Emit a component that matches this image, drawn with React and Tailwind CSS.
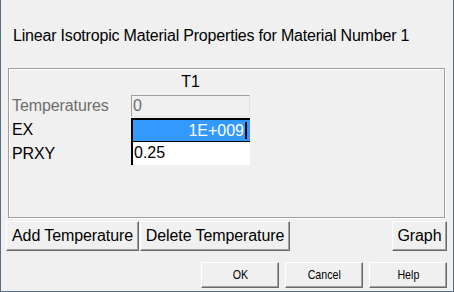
import React from 'react'

const sans = { fontFamily: '"Liberation Sans", Arial, sans-serif' }

function Button({ className = '', children, small }) {
  return (
    <button
      className={`flex items-center justify-center bg-[#f0f0f0] border border-t-white border-l-white border-b-[#696969] border-r-[#696969] shadow-[inset_-1px_-1px_0_#a0a0a0] text-black ${small ? 'text-[13px]' : 'text-[16px] tracking-[-0.1px]'} ${className}`}
      style={sans}
    >
      {small ? <span className="inline-block scale-x-[0.82]">{children}</span> : children}
    </button>
  )
}

export default function App() {
  const rows = [
    { label: 'Temperatures', value: '0', kind: 'disabled' },
    { label: 'EX', value: '1E+009', kind: 'selected' },
    { label: 'PRXY', value: '0.25', kind: 'normal' },
  ]

  return (
    <div
      className="w-[454px] h-[292px] bg-[#f0f0f0] border-l border-r border-b border-[#5b6d85] flex flex-col text-black overflow-hidden"
      style={sans}
    >
      <div className="mt-[27px] ml-[12px] text-[16px] leading-[18px] h-[18px] tracking-[-0.19px] whitespace-nowrap">
        Linear Isotropic Material Properties for Material Number 1
      </div>

      {/* Group box */}
      <div className="mt-[23px] ml-[7px] w-[437px] h-[150px] border border-[#a0a0a0] shadow-[inset_1px_1px_0_#fff,1px_1px_0_#fff] pl-[3px] pt-[4px]">
        <div className="flex">
          <div className="w-[119px]" />
          <div className="w-[119px] text-center text-[16px] leading-[18px]">T1</div>
        </div>
        <div className="mt-[4px] flex flex-col">
          {rows.map((r) => (
            <div
              key={r.label}
              className={`flex items-center ${r.kind === 'selected' ? 'h-[24px] mt-[1px]' : r.kind === 'normal' ? 'h-[23px]' : 'h-[22px]'}`}
            >
              <div className={`w-[119px] text-[16px] leading-[18px] tracking-[-0.1px] ${r.kind === 'disabled' ? 'text-[#6d6d6d]' : 'text-black'}`}>
                {r.label}
              </div>
              {r.kind === 'disabled' && (
                <div className="w-[119px] h-full bg-[#f0f0f0] border-t border-l border-[#a0a0a0] border-b border-r border-b-[#e3e3e3] border-r-[#e3e3e3] text-[#6d6d6d] text-[16px] leading-[20px] pl-[1px]">
                  {r.value}
                </div>
              )}
              {r.kind === 'selected' && (
                <div className="w-[119px] h-full bg-[#3399ff] border-t-2 border-l-2 border-b border-black border-b-black flex items-center justify-end pr-[3px] text-white text-[16px]">
                  <span>{r.value}</span>
                  <span className="ml-[1px] w-[2px] h-[17px] bg-black" />
                </div>
              )}
              {r.kind === 'normal' && (
                <div className="w-[119px] h-full bg-white border-l-2 border-black text-[16px] leading-[22px] pl-[1px]">
                  {r.value}
                </div>
              )}
            </div>
          ))}
        </div>
      </div>

      <div className="mt-[3px] ml-[5px] mr-[6px] flex h-[30px]">
        <Button className="w-[133px] h-[30px]">Add Temperature</Button>
        <Button className="ml-[1px] w-[150px] h-[30px]">Delete Temperature</Button>
        <div className="flex-1" />
        <Button className="w-[55px] h-[30px]">Graph</Button>
      </div>

      <div className="mt-[11px] flex justify-end gap-[6px] pr-[6px] h-[26px]">
        <Button small className="w-[78px] h-[26px]">OK</Button>
        <Button small className="w-[78px] h-[26px]">Cancel</Button>
        <Button small className="w-[78px] h-[26px]">Help</Button>
      </div>
    </div>
  )
}
